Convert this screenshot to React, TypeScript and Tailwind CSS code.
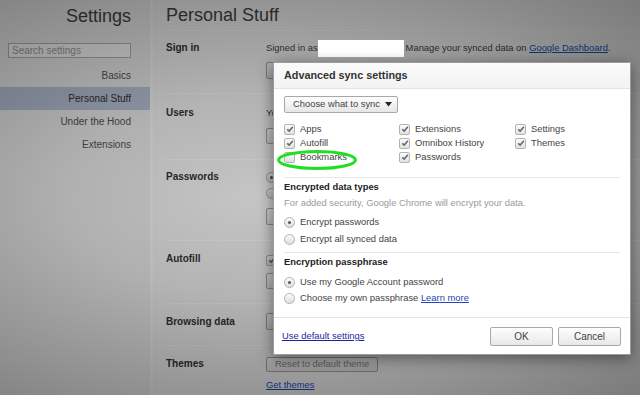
import React from 'react';

const Check = ({ checked = true }: { checked?: boolean }) => (
  <span className="w-[11px] h-[11px] shrink-0 rounded-[2px] border border-[#b3b3b3] bg-gradient-to-b from-[#fcfcfc] to-[#e2e2e2] flex items-center justify-center">
    {checked && (
      <svg width="8" height="8" viewBox="0 0 8 8">
        <path d="M1.2 4.3 L3.2 6.1 L6.9 1.8" fill="none" stroke="#6a6a6a" strokeWidth="1.6" />
      </svg>
    )}
  </span>
);

const Radio = ({ checked = false }: { checked?: boolean }) => (
  <span className="w-[11px] h-[11px] shrink-0 rounded-full border border-[#b0b0b0] bg-gradient-to-b from-[#fcfcfc] to-[#dedede] flex items-center justify-center">
    {checked && <span className="w-[3px] h-[3px] rounded-full bg-[#555]" />}
  </span>
);

const Btn = ({ children, dim = false, className = '' }: { children: React.ReactNode; dim?: boolean; className?: string }) => (
  <span className={`inline-flex items-center justify-center px-[8px] border border-[#a8a8a8] rounded-[2px] bg-gradient-to-b from-[#fefefe] to-[#e8e8e8] text-[9.4px] whitespace-nowrap ${dim ? 'text-[#8a8a8a]' : 'text-[#444]'} ${className}`}>
    {children}
  </span>
);

const Sidebar = () => (
  <aside className="w-[150px] shrink-0 bg-[#f1f1f1] flex flex-col">
    <div className="pt-[5px] pr-[19px] text-right text-[18px] leading-[22px] text-[#444]">Settings</div>
    <input
      placeholder="Search settings"
      className="block mt-[16px] ml-[8px] w-[123px] h-[15px] border border-[#b8b8b8] bg-white px-[3px] text-[10px] text-[#333] placeholder:text-[#a0a0a0] outline-none"
    />
    <nav className="mt-[6px] flex flex-col">
      {['Basics', 'Personal Stuff', 'Under the Hood', 'Extensions'].map((item) => (
        <div
          key={item}
          className={`h-[23px] flex items-center justify-end pr-[19px] text-[10px] ${
            item === 'Personal Stuff' ? 'bg-[#bcc6da] text-[#333]' : 'text-[#555]'
          }`}
        >
          {item}
        </div>
      ))}
    </nav>
  </aside>
);

const Label = ({ children, className = '' }: { children: React.ReactNode; className?: string }) => (
  <div className={`w-[100px] shrink-0 font-bold text-[10px] leading-[14px] text-[#333] ${className}`}>{children}</div>
);

const Main = () => (
  <main className="flex-1 border-l-[3px] border-[#fbfbfb] bg-[#f6f6f6] pl-[13px] text-[9.4px] text-[#444]">
    <div className="h-[31px] border-b border-white pt-[4px] text-[18px] leading-[22px] text-[#444]">Personal Stuff</div>

    {/* Sign in */}
    <section className="h-[62px] flex">
      <Label className="pt-[10px]">Sign in</Label>
      <div className="pt-[10px]">
        <div className="leading-[14px] whitespace-nowrap flex items-center">
          <span>Signed in as</span>
          <span className="inline-block w-[88px]" />
          <span>
            Manage your synced data on <span className="text-[#1a4fc4] underline">Google Dashboard</span>.
          </span>
        </div>
        <div className="mt-[7px] flex gap-[6px]">
          <Btn className="h-[17px]">Stop syncing this account</Btn>
          <Btn className="h-[17px]">Advanced...</Btn>
        </div>
      </div>
    </section>

    {/* Users */}
    <section className="h-[66px] flex border-t border-white">
      <Label className="pt-[12px]">Users</Label>
      <div className="pt-[12px]">
        <div className="leading-[14px]">You are currently the only Google Chrome user.</div>
        <Btn className="mt-[8px] h-[16px]">Add new user...</Btn>
      </div>
    </section>

    {/* Passwords */}
    <section className="h-[81px] flex border-t border-white">
      <Label className="pt-[10px]">Passwords</Label>
      <div className="pt-[9px]">
        <div className="h-[16px] flex items-center gap-[5px]"><Radio checked />Offer to save passwords</div>
        <div className="h-[16px] flex items-center gap-[5px]"><Radio />Never save passwords</div>
        <Btn className="mt-[7px] h-[17px]">Manage saved passwords</Btn>
      </div>
    </section>

    {/* Autofill */}
    <section className="h-[63px] flex border-t border-white">
      <Label className="pt-[11px]">Autofill</Label>
      <div className="pt-[11px]">
        <div className="h-[16px] flex items-center gap-[5px]"><Check />Enable Autofill to fill out web forms in a single click</div>
        <Btn className="mt-[5px] h-[16px]">Manage Autofill settings</Btn>
      </div>
    </section>

    {/* Browsing data */}
    <section className="h-[42px] flex border-t border-white">
      <Label className="pt-[11px]">Browsing data</Label>
      <div className="pt-[9px]">
        <Btn className="h-[17px]">Import data from another browser</Btn>
      </div>
    </section>

    {/* Themes */}
    <section className="flex border-t border-white">
      <Label className="pt-[11px]">Themes</Label>
      <div className="pt-[11px]">
        <Btn dim className="h-[15px]">Reset to default theme</Btn>
        <div className="mt-[6px] leading-[14px] text-[#1a4fc4] underline">Get themes</div>
      </div>
    </section>
  </main>
);

const Dialog = () => (
  <div className="absolute left-[273px] top-[62px] w-[358px] h-[293px] bg-white border border-[#9c9c9c] shadow-[0_3px_14px_rgba(0,0,0,0.45)] flex flex-col text-[9.4px] text-[#444]">
    <div className="h-[26px] shrink-0 border-b border-[#e4e4e4] bg-gradient-to-b from-[#fbfbfb] to-[#f3f3f3] pl-[10px] flex items-center font-bold text-[10.8px] text-[#333]">
      Advanced sync settings
    </div>

    <div className="pl-[10px] pr-[10px] flex flex-col">
      <div className="mt-[7px] w-[114px] h-[17px] border border-[#a8a8a8] rounded-[2px] bg-gradient-to-b from-[#fefefe] to-[#e6e6e6] flex items-center justify-between pl-[8px] pr-[5px] text-[#444]">
        <span>Choose what to sync</span>
        <svg width="7" height="5" viewBox="0 0 7 5"><path d="M0 0 H7 L3.5 4.5 Z" fill="#222" /></svg>
      </div>

      <div className="mt-[9px] grid grid-cols-[115px_116px_1fr]">
        {[
          ['Apps', true],
          ['Extensions', true],
          ['Settings', true],
          ['Autofill', true],
          ['Omnibox History', true],
          ['Themes', true],
          ['Bookmarks', false],
          ['Passwords', true],
        ].map(([label, on]) => (
          <div key={label as string} className="h-[14px] flex items-center gap-[5px] whitespace-nowrap">
            <Check checked={on as boolean} />
            <span>{label as string}</span>
          </div>
        ))}
      </div>

      <div className="mt-[13px] h-px bg-[#e6e6e6]" />

      <div className="mt-[2px] leading-[14px] font-bold text-[#222]">Encrypted data types</div>
      <div className="mt-[2px] leading-[14px] text-[#9a9a9a]">For added security, Google Chrome will encrypt your data.</div>
      <div className="mt-[4px] h-[17px] flex items-center gap-[5px]"><Radio checked />Encrypt passwords</div>
      <div className="h-[17px] flex items-center gap-[5px]"><Radio />Encrypt all synced data</div>

      <div className="mt-[4px] h-px bg-[#e6e6e6]" />

      <div className="mt-[2px] leading-[14px] font-bold text-[#222]">Encryption passphrase</div>
      <div className="mt-[5px] h-[16px] flex items-center gap-[5px]"><Radio checked />Use my Google Account password</div>
      <div className="h-[16px] flex items-center gap-[5px]">
        <Radio />
        <span>
          Choose my own passphrase <span className="text-[#2545b8] underline">Learn more</span>
        </span>
      </div>
    </div>

    <div className="mt-auto h-[37px] border-t border-[#e4e4e4] flex items-center justify-between pl-[8px] pr-[9px]">
      <span className="text-[#1f1f9e] underline">Use default settings</span>
      <div className="flex gap-[5px]">
        <Btn className="w-[63px] h-[19px] text-[10px]">OK</Btn>
        <Btn className="w-[63px] h-[19px] text-[10px]">Cancel</Btn>
      </div>
    </div>

    {/* annotation around Bookmarks */}
    <svg className="absolute left-[1px] top-[86px]" width="84" height="22" viewBox="0 0 84 22">
      <ellipse cx="42" cy="11" rx="38.5" ry="8.5" fill="none" stroke="#1fe01f" strokeWidth="3" />
    </svg>
  </div>
);

export default function App() {
  return (
    <div className="relative w-[640px] h-[395px] overflow-hidden font-['Liberation_Sans',Arial,sans-serif]">
      <div className="flex h-full">
        <Sidebar />
        <Main />
      </div>
      <div className="absolute inset-0 bg-[radial-gradient(ellipse_at_40%_50%,rgba(0,0,0,0.2)_0%,rgba(0,0,0,0.27)_35%,rgba(0,0,0,0.5)_100%)]" />
      <div className="absolute left-[318px] top-[40px] w-[86px] h-[17px] bg-white" />
      <Dialog />
    </div>
  );
}
